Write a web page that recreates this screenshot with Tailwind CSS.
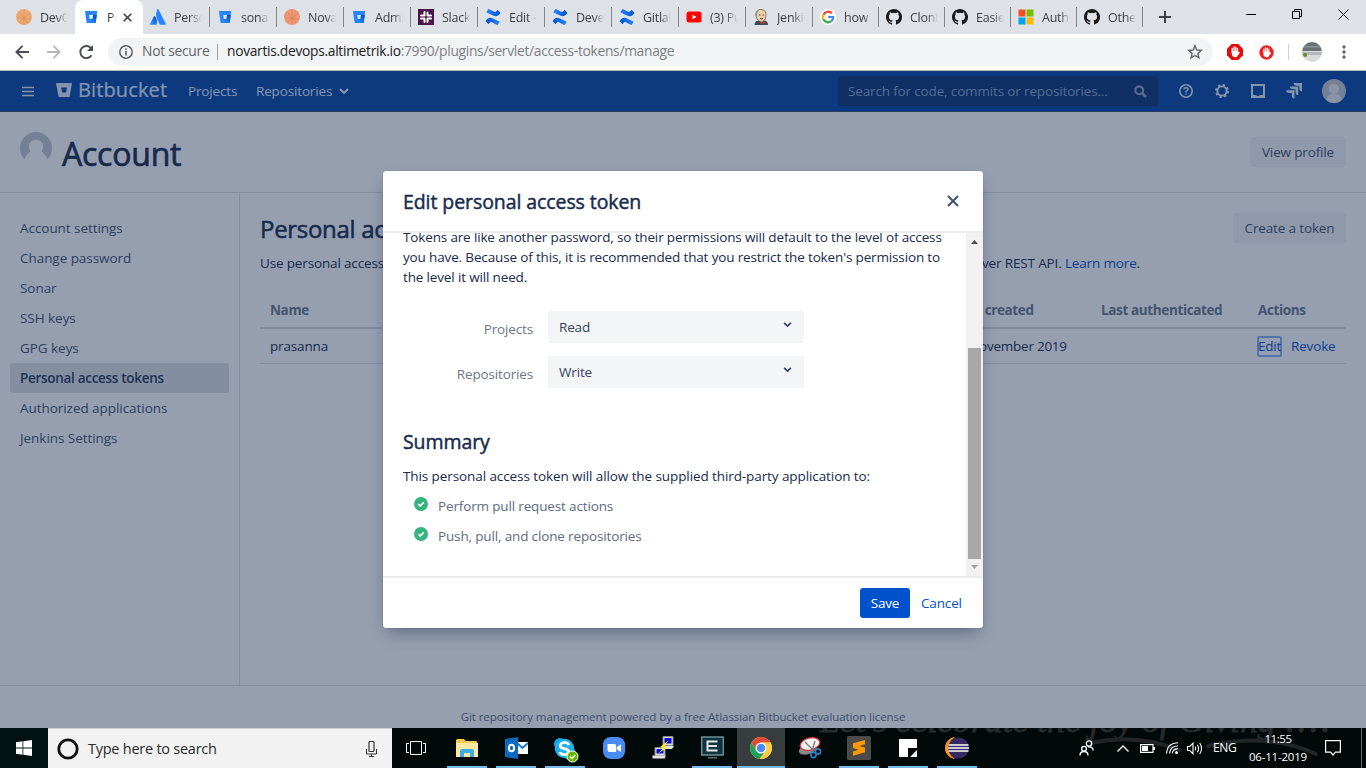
<!DOCTYPE html>
<html lang="en">
<head>
<meta charset="utf-8">
<title>Edit personal access token</title>
<script src="https://cdn.jsdelivr.net/npm/@tailwindcss/browser@4"></script>
</head>
<body class="w-[1366px] h-[768px] overflow-hidden bg-white font-['Open_Sans',sans-serif] text-[13.5px] tracking-[-0.15px] text-[#172b4d]">
<svg class="absolute size-0" aria-hidden="true">
  <defs>
    <linearGradient id="gb" x1="1" y1="0" x2="0" y2="1"><stop offset="0.15" stop-color="#0052cc"/><stop offset="0.7" stop-color="#2684ff"/></linearGradient>
    <linearGradient id="gc" x1="0" y1="0" x2="1" y2="0"><stop offset="0" stop-color="#0052cc"/><stop offset="1" stop-color="#2684ff"/></linearGradient>
  </defs>
  <symbol id="bb" viewBox="0 0 16 16"><path fill="#2684ff" fill-rule="evenodd" d="M2.500 2h11.200q.6 0 .5.6l-1.500 10.800q-.1.600-.7.600H4.300q-.6 0-.7-.6L2 2.600Q1.900 2 2.500 2zM6.200 6l.6 4h2.700l.6-4z"/><path fill="url(#gb)" d="M13.800 6H10.100l-.6 4H6.800l-3 3.700q.2.300.6.300H12q.6 0 .7-.6z"/></symbol>
  <symbol id="cf" viewBox="0 0 16 16"><path fill="url(#gc)" d="M.8 11.800C3 8.400 5.200 8.200 8.500 9.700l5.800 2.700q.4.300.2.700l-1.500 2.500q-.3.500-.8.300L7.500 13.500C5.600 12.600 5 13 3.900 14.700q-.3.400-.7.200L.9 12.600q-.4-.3-.1-.8z"/><path fill="url(#gc)" transform="rotate(180 8 8)" d="M.8 11.800C3 8.400 5.200 8.200 8.500 9.700l5.800 2.700q.4.300.2.700l-1.500 2.500q-.3.500-.8.300L7.500 13.500C5.600 12.600 5 13 3.900 14.700q-.3.400-.7.200L.9 12.600q-.4-.3-.1-.8z"/></symbol>
  <symbol id="gh" viewBox="0 0 16 16"><path fill="#191717" d="M8 0C3.580 0 0 3.580 0 8c0 3.540 2.290 6.530 5.470 7.590.4.070.55-.17.55-.38v-1.490c-2.230.48-2.700-.94-2.700-.94-.36-.92-.89-1.170-.89-1.170-.72-.49.060-.48.060-.48.800.060 1.230.82 1.230.82.710 1.220 1.870.87 2.330.66.070-.52.280-.87.500-1.070-1.780-.2-3.640-.89-3.640-3.950 0-.87.310-1.590.82-2.150-.08-.2-.36-1.020.080-2.120 0 0 .67-.21 2.200.82a7.600 7.600 0 0 1 4 0c1.530-1.040 2.200-.82 2.200-.82.440 1.100.160 1.920.080 2.120.510.560.820 1.270.820 2.150 0 3.070-1.870 3.750-3.650 3.950.290.250.540.730.540 1.480v2.200c0 .210.150.460.550.380A8 8 0 0 0 8 0z"/></symbol>
  <symbol id="sun" viewBox="0 0 16 16"><circle cx="8" cy="8" r="8" fill="currentColor"/><g stroke="#b8744a" stroke-width=".5" opacity=".65"><path d="M8 9 3 3M8 9V1M8 9l6-5M8 9H1M8 9l7 1M8 9l-5 5M8 9v6.500M8 9l4 5"/></g></symbol>
  <symbol id="chev" viewBox="0 0 10 6"><path d="m1 1 4 4 4-4" fill="none" stroke="currentColor" stroke-width="2"/></symbol>
</svg>

<div class="relative flex h-[768px] flex-col">
  <!-- tab strip -->
  <div class="flex h-[34px] shrink-0 bg-[#dee1e6] text-[12.500px] leading-[33px] tracking-[-0.250px] text-[#3c4043]">
    <div class="flex w-[75px] items-center pl-4"><svg class="mr-2 size-4 shrink-0 text-[#efa872]"><use href="#sun"/></svg><span class="w-7 overflow-hidden whitespace-nowrap [mask-image:linear-gradient(to_right,#000_55%,transparent)]">DevOps</span></div>
    <div class="flex w-[68px] items-center rounded-t-lg bg-white pl-2"><svg class="mr-2 size-4 shrink-0"><use href="#bb"/></svg><span class="w-[9px] overflow-hidden whitespace-nowrap [mask-image:linear-gradient(to_right,#000_55%,transparent)]">Pers</span><svg class="ml-[7px] size-[9px]" viewBox="0 0 9 9"><path d="m.7.7 7.600 7.600M8.300.7.700 8.300" stroke="#3c4043" stroke-width="1.600"/></svg></div>
    <div class="flex w-[67px] items-center pl-[7px]"><svg class="mr-2 size-4 shrink-0" viewBox="0 0 16 16"><path fill="url(#gb)" d="M4.800 7.200Q4.300 6.700 4 7.300L.1 15q-.2.600.4.700h5.400q.3 0 .5-.3C7.500 13 7 9.500 4.800 7.200z"/><path fill="#2684ff" d="M7.700.3C5.600 3.600 5.800 7.300 7.100 10l2.700 5.400q.2.300.6.300h5.100q.6-.1.400-.7L8.500.4q-.4-.6-.8-.1z"/></svg><span class="w-7 overflow-hidden whitespace-nowrap [mask-image:linear-gradient(to_right,#000_55%,transparent)]">Personal</span><i class="ml-auto h-5 w-px bg-[#80868b]"></i></div>
    <div class="flex w-[67px] items-center pl-[7px]"><svg class="mr-2 size-4 shrink-0"><use href="#bb"/></svg><span class="w-7 overflow-hidden whitespace-nowrap [mask-image:linear-gradient(to_right,#000_65%,transparent)]">sonar-</span><i class="ml-auto h-5 w-px bg-[#80868b]"></i></div>
    <div class="flex w-[67px] items-center pl-[7px]"><svg class="mr-2 size-4 shrink-0 text-[#ed9672]"><use href="#sun"/></svg><span class="w-7 overflow-hidden whitespace-nowrap [mask-image:linear-gradient(to_right,#000_65%,transparent)]">Novartis</span><i class="ml-auto h-5 w-px bg-[#80868b]"></i></div>
    <div class="flex w-[67px] items-center pl-[7px]"><svg class="mr-2 size-4 shrink-0"><use href="#bb"/></svg><span class="w-7 overflow-hidden whitespace-nowrap [mask-image:linear-gradient(to_right,#000_65%,transparent)]">Admin</span><i class="ml-auto h-5 w-px bg-[#80868b]"></i></div>
    <div class="flex w-[67px] items-center pl-[7px]"><svg class="mr-2 size-4 shrink-0" viewBox="0 0 16 16"><path fill="#4a154b" d="M0 0h16v16H0z"/><path d="M6.500 3v3.500M3 6.500h3.500M9.500 3.500v3M9.700 6.500H13M3 9.500h3.300M6.500 9.700V13M9.500 9.500H13M9.500 9.700V13" stroke="#fff" stroke-width="2" stroke-linecap="round"/></svg><span class="w-7 overflow-hidden whitespace-nowrap [mask-image:linear-gradient(to_right,#000_75%,transparent)]">Slack</span><i class="ml-auto h-5 w-px bg-[#80868b]"></i></div>
    <div class="flex w-[67px] items-center pl-[7px]"><svg class="mr-2 size-4 shrink-0"><use href="#cf"/></svg><span class="w-7 overflow-hidden whitespace-nowrap [mask-image:linear-gradient(to_right,#000_65%,transparent)]">Edit - P</span><i class="ml-auto h-5 w-px bg-[#80868b]"></i></div>
    <div class="flex w-[67px] items-center pl-[7px]"><svg class="mr-2 size-4 shrink-0"><use href="#cf"/></svg><span class="w-7 overflow-hidden whitespace-nowrap [mask-image:linear-gradient(to_right,#000_65%,transparent)]">Develop</span><i class="ml-auto h-5 w-px bg-[#80868b]"></i></div>
    <div class="flex w-[67px] items-center pl-[7px]"><svg class="mr-2 size-4 shrink-0"><use href="#cf"/></svg><span class="w-7 overflow-hidden whitespace-nowrap [mask-image:linear-gradient(to_right,#000_65%,transparent)]">Gitlab</span><i class="ml-auto h-5 w-px bg-[#80868b]"></i></div>
    <div class="flex w-[67px] items-center pl-[7px]"><svg class="mr-2 size-4 shrink-0" viewBox="0 0 16 16"><rect x=".5" y="2.500" width="15" height="11" rx="2.500" fill="red"/><path d="M6.500 5.700v4.600L10.500 8z" fill="#fff"/></svg><span class="w-7 overflow-hidden whitespace-nowrap [mask-image:linear-gradient(to_right,#000_55%,transparent)]">(3) Pull</span><i class="ml-auto h-5 w-px bg-[#80868b]"></i></div>
    <div class="flex w-[67px] items-center pl-[7px]"><svg class="mr-2 size-4 shrink-0" viewBox="0 0 16 16"><path d="M1.500 16q0-4 4-4.500L8 13l4-1.500q3 1 3 4.500z" fill="#3b4a55"/><path d="M3 6.500C2.500 2.500 5 .5 8 .5s5.500 2 5 6.200c-.3 3.300-2 6-4.500 6S3.500 10 3 6.500z" fill="#eccfae" stroke="#5b4a3a" stroke-width=".7"/><path d="M2.700 7C2 3 4 .8 7 .7 4.500 2 4.200 4 4 7z" fill="#9a9488"/><path d="M6 6h1.500M9.500 6H11M7 9.500q1.500.8 3 0" stroke="#4a3930" fill="none"/><path d="M7 12.500v2.500l2-1 2.500 1.200v-2.900L9 13.300z" fill="#d33833"/></svg><span class="w-7 overflow-hidden whitespace-nowrap [mask-image:linear-gradient(to_right,#000_55%,transparent)]">Jenkins</span><i class="ml-auto h-5 w-px bg-[#80868b]"></i></div>
    <div class="flex w-[66px] items-center pl-[7px]"><svg class="mr-2 size-4 shrink-0" viewBox="0 0 16 16"><circle cx="8" cy="8" r="8" fill="#fff"/><g fill="none" stroke-width="2.200"><path d="M11.900 4.300A5.200 5.200 0 0 0 3.400 5.700" stroke="#ea4335"/><path d="M3.400 5.600a5.200 5.200 0 0 0 0 4.900" stroke="#fbbc05"/><path d="M3.300 10.300a5.200 5.200 0 0 0 8 1.800" stroke="#34a853"/><path d="M8.200 8h5a5.200 5.200 0 0 1-1.900 4.100" stroke="#4285f4"/></g></svg><span class="w-7 overflow-hidden whitespace-nowrap [mask-image:linear-gradient(to_right,#000_70%,transparent)]">how to</span><i class="ml-auto h-5 w-px bg-[#80868b]"></i></div>
    <div class="flex w-[66px] items-center pl-[7px]"><svg class="mr-2 size-4 shrink-0"><use href="#gh"/></svg><span class="w-7 overflow-hidden whitespace-nowrap [mask-image:linear-gradient(to_right,#000_60%,transparent)]">Cloning</span><i class="ml-auto h-5 w-px bg-[#80868b]"></i></div>
    <div class="flex w-[66px] items-center pl-[7px]"><svg class="mr-2 size-4 shrink-0"><use href="#gh"/></svg><span class="w-7 overflow-hidden whitespace-nowrap [mask-image:linear-gradient(to_right,#000_60%,transparent)]">Easiest</span><i class="ml-auto h-5 w-px bg-[#80868b]"></i></div>
    <div class="flex w-[66px] items-center pl-[7px]"><svg class="mr-2 size-4 shrink-0" viewBox="0 0 16 16"><path fill="#f25022" d="M.5.500h7v7h-7z"/><path fill="#7fba00" d="M8.500.500h7v7h-7z"/><path fill="#00a4ef" d="M.5 8.500h7v7h-7z"/><path fill="#ffb900" d="M8.500 8.500h7v7h-7z"/></svg><span class="w-7 overflow-hidden whitespace-nowrap [mask-image:linear-gradient(to_right,#000_65%,transparent)]">Authen</span><i class="ml-auto h-5 w-px bg-[#80868b]"></i></div>
    <div class="flex w-[66px] items-center pl-[7px]"><svg class="mr-2 size-4 shrink-0"><use href="#gh"/></svg><span class="w-7 overflow-hidden whitespace-nowrap [mask-image:linear-gradient(to_right,#000_65%,transparent)]">Other</span><i class="ml-auto h-5 w-px bg-[#80868b]"></i></div>
    <svg class="mt-[11px] ml-4 size-3" viewBox="0 0 12 12"><path d="M6 0v12M0 6h12" stroke="#3c4043" stroke-width="2"/></svg>
    <svg class="mt-[9px] mr-[17px] ml-auto h-[11px] w-[103px]" viewBox="0 0 103 11" fill="none" stroke="#000"><path d="M0 5.500h10M46.500 2.500h7v7h-7zM48.500 2.500v-2h7v7h-2M92.500.500l10 10M102.500.500l-10 10"/></svg>
  </div>

  <!-- address bar -->
  <div class="flex h-[37px] shrink-0 items-center border-b border-[#b6b8ba] bg-white pl-[15px]">
    <svg class="h-[14px] w-[82px]" viewBox="0 0 82 14" fill="none" stroke-width="1.900"><path d="M14 7H1.500M7.500.900 1.400 7l6.100 6.100" stroke="#4a4d51"/><path d="M32 7h12.500M38.500.900 44.600 7l-6.100 6.100" stroke="#b5b7ba"/><path d="M76.500 10.200A6 6 0 1 1 75.600 2.800L77.500 5" stroke="#4a4d51"/><path d="M78 0v5.900h-6z" fill="#4a4d51"/></svg>
    <div class="ml-[11px] flex h-7 w-[1105px] items-center rounded-full bg-[#f1f3f4] pl-[11px]">
      <svg class="size-[14px]" viewBox="0 0 14 14"><circle cx="7" cy="7" r="6.200" fill="none" stroke="#5f6368" stroke-width="1.500"/><path d="M7 6v4.500M7 3.300v1.500" stroke="#5f6368" stroke-width="1.600"/></svg>
      <span class="ml-[9px] w-[67px] pb-px text-[13.800px] tracking-[-0.250px] whitespace-nowrap text-[#5f6368]">Not secure</span>
      <i class="mr-[9px] ml-2 h-4 w-px bg-[#9aa0a6]"></i>
      <span class="pb-px text-[13.800px] tracking-[-0.300px] whitespace-nowrap text-[#7c8085]"><span class="text-[#202124]">novartis.devops.altimetrik.io</span>:7990/plugins/servlet/access-tokens/manage</span>
      <svg class="mr-[10px] ml-auto size-4" viewBox="0 0 16 16"><path d="m8 1.800 1.800 4.200 4.500.400-3.400 3 1 4.400L8 11.500l-3.900 2.300 1-4.400-3.400-3L6.200 6z" fill="none" stroke="#5f6368" stroke-width="1.400"/></svg>
    </div>
    <svg class="ml-[14px] size-4" viewBox="0 0 16 16"><path d="M4.700 0h6.600L16 4.700v6.600L11.300 16H4.700L0 11.300V4.700z" fill="#e30b0b"/><path d="M5.200 8V4.500M7 7.500V3M8.800 7.500V3.200M10.500 8V4.300" stroke="#fff" stroke-width="1.300" stroke-linecap="round"/><path d="M4.500 7h6.700v3.500q-.5 2.700-3 2.700T5 11z" fill="#fff"/><path d="m11 10.500 1.300-2.500" stroke="#fff" stroke-width="1.400"/></svg>
    <svg class="ml-4 size-[15px]" viewBox="0 0 16 16"><circle cx="8" cy="8" r="7.700" fill="#f91c1c"/><path d="M5.200 8V4.500M7 7.500V3M8.800 7.500V3.200M10.500 8V4.300" stroke="#fff" stroke-width="1.300" stroke-linecap="round"/><path d="M4.500 7h6.700v3.500q-.5 2.700-3 2.700T5 11z" fill="#fff"/><path d="m11 10.500 1.300-2.500" stroke="#fff" stroke-width="1.400"/></svg>
    <i class="ml-[14px] h-4 w-px bg-[#d0d3d6]"></i>
    <svg class="ml-[13px] size-5" viewBox="0 0 20 20"><clipPath id="pc"><circle cx="10" cy="10" r="10"/></clipPath><g clip-path="url(#pc)"><path fill="#d9dadb" d="M0 0h20v20H0z"/><path fill="#6d7175" d="M0 0h20v9H0z"/><path fill="#8d9092" d="M2 4h16v1.500H2z"/><path fill="#b4b6b8" d="M0 10h20v3H0z"/><circle cx="3" cy="13" r="2" fill="#5c8a20"/></g></svg>
    <svg class="ml-5 h-[14px] w-1" viewBox="0 0 4 14" fill="#5f6368"><circle cx="2" cy="2" r="1.700"/><circle cx="2" cy="7" r="1.700"/><circle cx="2" cy="12" r="1.700"/></svg>
  </div>

  <!-- page -->
  <div class="relative flex h-[657px] shrink-0 flex-col overflow-hidden">
    <header class="flex h-[41px] shrink-0 items-center border-b border-[#2e4a7c] bg-[#0747a6] pl-[22px] text-[#deebff]">
      <svg class="h-[11px] w-3" viewBox="0 0 12 11"><path d="M0 1.500h12M0 5.500h12M0 9.500h12" stroke="currentColor" stroke-width="1.500"/></svg>
      <svg class="ml-[22px] mb-[3px] h-[14px] w-4" viewBox="0 0 16 14"><path d="M0 0h16l-2.300 13.400q-.1.600-.7.600H3.200q-.6 0-.7-.6zM5.200 4.500l1 5h4l.8-5z" fill="currentColor" fill-rule="evenodd"/></svg>
      <span class="ml-[6px] w-[89px] pb-[3px] text-[20px] leading-6 tracking-[0.120px] whitespace-nowrap [-webkit-text-stroke:0.2px]">Bitbucket</span>
      <span class="ml-[21px] w-[49px] whitespace-nowrap">Projects</span>
      <span class="ml-[19px] w-[77px] whitespace-nowrap">Repositories</span>
      <svg class="ml-[6px] h-[6px] w-[10px]"><use href="#chev"/></svg>
      <div class="ml-auto flex h-[30px] w-[320px] items-center rounded-[3px] bg-[#0a3478] pl-[10px] text-[#8aa2cd]"><span class="w-[262px] whitespace-nowrap">Search for code, commits or repositories...</span>
        <svg class="ml-auto mr-[11px] size-[13px]" viewBox="0 0 13 13"><circle cx="5.200" cy="5.200" r="3.900" fill="none" stroke="currentColor" stroke-width="2.200"/><path d="m8 8 4 4" stroke="currentColor" stroke-width="2.600"/></svg></div>
      <svg class="ml-[21px] size-[14px]" viewBox="0 0 14 14"><circle cx="7" cy="7" r="6.200" fill="none" stroke="currentColor" stroke-width="1.600"/><path d="M5 5.500Q5 3.800 7 3.800t2 1.700Q9 6.700 7 7.300v1.200M7 9.500V11" fill="none" stroke="currentColor" stroke-width="1.400"/></svg>
      <svg class="ml-[22px] size-[14px]" viewBox="0 0 14 14" fill="none" stroke="currentColor"><circle cx="7" cy="7" r="4.600" stroke-width="1.900"/><circle cx="7" cy="7" r="6" stroke-width="2" stroke-dasharray="2.350 2.350"/></svg>
      <svg class="ml-[22px] size-[14px]" viewBox="0 0 14 14"><path d="M1 1h12v12H1z" fill="none" stroke="currentColor" stroke-width="2"/><path d="M1 11h4l1 1h2l1-1h4v2H1z" fill="currentColor"/></svg>
      <svg class="ml-[21px] size-4" viewBox="0 0 16 16" fill="currentColor"><path d="M7.500 0H16v8.500q-2.700-.3-2.700-3.200V2.700h-2.600Q7.800 2.700 7.500 0z"/><path d="M3.700 3.600h8.500v8.500q-2.700-.3-2.700-3.200V6.300H6.900Q4 6.300 3.700 3.600z"/><path d="M0 7.300h8.500v8.500q-2.700-.3-2.700-3.200V10H3.200Q.3 10 0 7.300z"/></svg>
      <svg class="mx-5 size-6" viewBox="0 0 24 24"><circle cx="12" cy="12" r="12" fill="#c1c7d0"/><circle cx="12" cy="9.800" r="5" fill="#ebecf0"/><path d="M4 20.500Q6 14.500 12 14.500t8 6Q17 24 12 24t-8-3.500z" fill="#ebecf0"/></svg>
    </header>

    <div class="flex h-[81px] shrink-0 items-start border-b border-[#dfe1e6] pl-5">
      <svg class="mt-5 size-8" viewBox="0 0 32 32"><path d="M4.500 27.200a16 16 0 1 1 23 0Q25.500 22 21.500 19.500a7.200 7.200 0 1 0-11 0Q6.500 22 4.500 27.200z" fill="#c1c7d0"/></svg>
      <h1 class="ml-[10px] mt-[22px] text-[32px] leading-10 tracking-[-0.220px] [-webkit-text-stroke:0.7px]">Account</h1>
      <span class="mt-[25px] mr-5 ml-auto w-24 rounded-[3px] bg-[#f4f5f7] text-center leading-[30px] text-[#42526e]">View profile</span>
    </div>

    <div class="flex h-[493px] shrink-0 border-b border-[#dfe1e6]">
      <nav class="flex w-60 shrink-0 flex-col border-r border-[#dfe1e6] px-[10px] pt-5 leading-[30px] tracking-[-0.050px] text-[#42526e] [&>a]:rounded-[3px] [&>a]:px-[10px]">
        <a>Account settings</a><a>Change password</a><a>Sonar</a><a>SSH keys</a><a>GPG keys</a><a class="bg-[#dfe1e6] font-semibold tracking-[-0.300px] text-[#253858]">Personal access tokens</a><a>Authorized applications</a><a>Jenkins Settings</a>
      </nav>
      <main class="flex grow flex-col pt-5 pr-5 pl-5">
        <div class="flex justify-between">
          <h2 class="text-[24px] leading-8 tracking-[-0.300px] [-webkit-text-stroke:0.55px]">Personal access tokens</h2>
          <span class="h-[30px] w-[113px] rounded-[3px] bg-[#f4f5f7] text-center leading-[30px] text-[#42526e]">Create a token</span>
        </div>
        <p class="mt-2 flex leading-5 whitespace-nowrap"><span class="w-[722px] overflow-hidden">Use personal access tokens in place of passwords for Git over HTTPS, or when using Bitbucket Ser</span><span>ver REST API. <a class="text-[#0052cc]">Learn more</a>.</span></p>
        <div class="mt-[19px] grid h-[37px] grid-cols-[681px_150px_157px_88px] border-b-2 border-[#d7dae0] pl-[10px] leading-[36px] font-bold tracking-[-0.370px] text-[#6b778c]"><span>Name</span><span>Date created</span><span>Last authenticated</span><span>Actions</span></div>
        <div class="grid h-[35px] grid-cols-[681px_150px_157px_88px] border-b border-[#dfe1e6] pl-[10px] leading-[34px] whitespace-nowrap"><span>prasanna</span><span class="tracking-[-0.250px]">06 November 2019</span><span></span><span class="flex items-center gap-[10px] text-[#0052cc]"><a class="-ml-px h-[21px] w-[25px] rounded-[2px] border-2 border-[#86b0f5] leading-[17px] tracking-[-0.250px]"><span class="-ml-px">Edit</span></a><a class="-ml-px">Revoke</a></span></div>
      </main>
    </div>
    <footer class="pt-[22px] text-center text-[11.500px] leading-[18px] tracking-[-0.080px] text-[#5e6c84]">Git repository management powered by a free Atlassian Bitbucket evaluation license</footer>

    <!-- dialog -->
    <div class="absolute inset-0 bg-[#172b4d]/45">
      <section class="absolute top-[100px] left-[383px] flex h-[457px] w-[600px] flex-col rounded-[3px] bg-white shadow-[0_8px_16px_-4px_rgba(9,30,66,0.4),0_0_1px_rgba(9,30,66,0.4)]">
        <div class="flex h-[62px] shrink-0 items-center justify-between border-b-2 border-[#ebecf0] pr-6 pl-5"><h3 class="pt-[1px] text-[19.500px] tracking-[-0.080px] [-webkit-text-stroke:0.45px]">Edit personal access token</h3><svg class="size-3" viewBox="0 0 12 12"><path d="m1 1 10 10M11 1 1 11" stroke="#42526e" stroke-width="2"/></svg></div>
        <div class="flex h-[343px] shrink-0">
          <div class="flex w-[583px] flex-col overflow-hidden pl-5">
            <p class="-mt-[6px] leading-5 whitespace-nowrap">Tokens are like another password, so their permissions will default to the level of access<br>you have. Because of this, it is recommended that you restrict the token's permission to<br>the level it will need.</p>
            <div class="mt-[24px] flex h-8"><span class="w-[130px] pt-[8px] text-right leading-5 text-[#6b778c]">Projects</span><span class="ml-[15px] flex w-64 justify-between rounded-[3px] bg-[#f4f5f7] pr-[12px] pl-[11px] leading-8 text-[#344563]">Read<svg class="mt-[11px] h-[5px] w-[9px]"><use href="#chev"/></svg></span></div>
            <div class="mt-[13px] flex h-8"><span class="w-[130px] pt-[8px] text-right leading-5 text-[#6b778c]">Repositories</span><span class="ml-[15px] flex w-64 justify-between rounded-[3px] bg-[#f4f5f7] pr-[12px] pl-[11px] leading-8 text-[#344563]">Write<svg class="mt-[11px] h-[5px] w-[9px]"><use href="#chev"/></svg></span></div>
            <h3 class="mt-10 text-[19.500px] leading-7 tracking-[-0.080px] [-webkit-text-stroke:0.45px]">Summary</h3>
            <p class="mt-[10px] leading-5 tracking-[-0.090px]">This personal access token will allow the supplied third-party application to:</p>
            <ul class="mt-[10px] flex flex-col gap-[10px] pl-[11px] leading-5 text-[#5e6c84]">
              <li class="flex"><svg class="mt-px mr-[10px] size-[14px]" viewBox="0 0 14 14"><circle cx="7" cy="7" r="7" fill="#36b37e"/><path d="m4.300 7 1.900 2 3.600-3.600" fill="none" stroke="#fff" stroke-width="1.800"/></svg><span>Perform pull request actions</span></li>
              <li class="flex"><svg class="mt-px mr-[10px] size-[14px]" viewBox="0 0 14 14"><circle cx="7" cy="7" r="7" fill="#36b37e"/><path d="m4.300 7 1.900 2 3.600-3.600" fill="none" stroke="#fff" stroke-width="1.800"/></svg><span>Push, pull, and clone repositories</span></li>
            </ul>
          </div>
          <div class="flex w-[17px] flex-col bg-[#f1f1f1] px-[2px]"><svg class="mt-[7px] ml-[3px] h-1 w-[7px]" viewBox="0 0 7 4"><path d="M0 4 3.500 0 7 4z" fill="#505050"/></svg><i class="mt-[104px] h-[211px] w-[13px] bg-[#a8a8a8]"></i><svg class="mt-[6px] ml-[3px] h-1 w-[7px]" viewBox="0 0 7 4"><path d="M0 0 3.500 4 7 0z" fill="#a3a3a3"/></svg></div>
        </div>
        <div class="flex grow items-center justify-end border-t-2 border-[#ebecf0] pr-[21px]"><span class="w-[50px] rounded-[3px] bg-[#0052cc] text-center leading-[30px] text-white">Save</span><span class="ml-[11px] w-[41px] whitespace-nowrap text-[#0052cc]">Cancel</span></div>
      </section>
    </div>
  </div>

  <!-- taskbar -->
  <div class="relative flex h-10 shrink-0 overflow-hidden bg-[#020909] text-white">
    <div class="absolute -top-[30px] left-[820px] font-['Liberation_Serif',serif] text-[36px] leading-[44px] tracking-[-0.150px] whitespace-nowrap text-[#262a2a] italic [-webkit-text-stroke:0.8px_#262a2a]">Let's celebrate the joy of Giving !!!!</div>
    <svg class="absolute top-[8px] left-[1090px] h-6 w-[235px]" viewBox="0 0 235 24"><path d="M0 7Q45-3 90 14M118 10q60-14 108 8" fill="none" stroke="#212525" stroke-width="4" stroke-linecap="round"/></svg>
    <div class="relative flex w-full">
      <div class="flex w-12 items-center justify-center bg-[#021313]"><svg class="size-4" viewBox="0 0 16 16" fill="#fff"><path d="M0 2.200 6.500 1.300v6.200H0zM7.300 1.200 16 0v7.500H7.300zM0 8.400h6.500v6.300L0 13.800zM7.300 8.400H16V16l-8.700-1.200z"/></svg></div>
      <div class="flex w-[344px] items-center border-t border-[#cfcfcf] bg-[#f2f2f2] pl-[9px] text-[#2b2b2b]"><svg class="size-[22px]" viewBox="0 0 22 22"><circle cx="11" cy="11" r="9.200" fill="none" stroke="#111" stroke-width="2.800"/></svg><span class="ml-[9px] w-[128px] text-[14.500px] tracking-[-0.250px] whitespace-nowrap">Type here to search</span><svg class="mr-[15px] ml-auto h-4 w-[11px]" viewBox="0 0 11 16" fill="none" stroke="#333"><rect x="3" y=".5" width="5" height="10" rx="1" stroke-width="1.200"/><path d="M.5 8v5h10V8M5.500 13v3M3 15.500h5"/></svg></div>
      <div class="flex w-[51px] items-center pl-[14px]"><svg class="h-[14px] w-5" viewBox="0 0 20 14" fill="none" stroke="#fff"><path d="M4.500.5h11v13h-11zM3 2.500H.500v9H3M17 2.500h2.500v9H17"/></svg></div>
      <div class="flex gap-px [&>div]:flex [&>div]:w-12 [&>div]:items-center [&>div]:justify-center [&>div]:pb-px">
        <div class="shadow-[inset_0_-2px_#76b9ed] [clip-path:inset(0_4px)]"><svg class="h-[18px] w-[22px]" viewBox="0 0 22 18"><path d="M0 1.500Q0 0 1.500 0H8l1.500 2H20q1 0 1 1v14H0z" fill="#f5c951"/><path d="M0 4h22v14H0z" fill="#ffe9a2"/><path d="M4 18v-6q0-2 2-2h10q2 0 2 2v6h-4v-4H8v4z" fill="#3bb0e6"/></svg></div>
        <div class="shadow-[inset_0_-2px_#76b9ed] [clip-path:inset(0_4px)]"><svg class="h-[22px] w-[23px]" viewBox="0 0 23 22"><path d="M12 5h11v12H12z" fill="#fff"/><path d="m12 6 5.500 5L23 6" fill="none" stroke="#1477cc" stroke-width="2"/><path d="m0 2 13-2v22L0 20z" fill="#0a6abf"/><ellipse cx="6.500" cy="11" rx="2.600" ry="3.300" fill="none" stroke="#fff" stroke-width="2"/></svg></div>
        <div class="shadow-[inset_0_-2px_#76b9ed] [clip-path:inset(0_4px)]"><svg class="mt-1 ml-[1px] size-[26px]" viewBox="0 0 26 26"><circle cx="7" cy="7" r="6" fill="#12a5e8"/><circle cx="16" cy="16" r="6.500" fill="#12a5e8"/><circle cx="11.500" cy="11.500" r="9.700" fill="#1fb0ee"/><path d="M16 8Q15 5.500 11.500 5.500T7.200 8.400q0 2.500 4 3.200t4.500 3q0 3-4.200 3T7 15" fill="none" stroke="#fff" stroke-width="2.700"/><circle cx="19.500" cy="19.500" r="5.500" fill="#6bb700" stroke="#fff"/><path d="m17 19.500 2 2 3.200-3.500" fill="none" stroke="#fff" stroke-width="1.500"/></svg></div>
        <div><svg class="size-[22px]" viewBox="0 0 22 22"><rect width="22" height="22" rx="7.500" fill="#4a8cf7"/><path d="M4.500 7h6.700q2 0 2 2v6H6.500q-2 0-2-2zM14 10l4-2.800v7.800L14 12.500z" fill="#fff"/></svg></div>
        <div><svg class="size-[23px]" viewBox="0 0 23 23"><path d="M11 .500h10v9H11zM3 11.500h10v8H3z" fill="#ddd" stroke="#888"/><path d="M12.500 2h7v5.500h-7zM4.500 13h7v4.500h-7z" fill="#0808ce"/><path d="M10 10h12l-2 3h-9zM.5 19.500H14L12.500 22.500H.500z" fill="#e5e5e5"/><path d="m17 4-9 7 4 .500-6 6 9.500-6-3.500-1z" fill="#ffee13"/></svg></div>
        <div class="shadow-[inset_0_-2px_#76b9ed] [clip-path:inset(0_4px)]"><svg class="size-[23px]" viewBox="0 0 23 23"><path d="M.700 1h21.600v18H.700z" fill="#10343d" stroke="#6a9199" stroke-width="1.400"/><path d="M16.500 5.500h-10v9h10M7 10h9" fill="none" stroke="#e4eaeb" stroke-width="2"/><path d="M7 21.800h9" stroke="#4b6d75" stroke-width="1.500"/></svg></div>
        <div class="bg-[#373d3d] shadow-[inset_0_-2px_#76b9ed]"><svg class="size-[22px]" viewBox="0 0 22 22"><circle cx="11" cy="11" r="11" fill="#ffcd42"/><path d="M1.500 5.500A11 11 0 0 1 20.500 5.500H11L6.200 13.700z" fill="#e04a3a"/><path d="M1.500 5.500A11 11 0 0 0 9.600 21.900L15.500 14 11 16 6.200 13.700z" fill="#1fa15d"/><path d="M11 5.500h9.500A11 11 0 0 1 9.600 21.900L15.800 13.700z" fill="#ffcd42"/><circle cx="11" cy="11" r="5.500" fill="#fff"/><circle cx="11" cy="11" r="4.300" fill="#4c8bf5"/></svg></div>
        <div><svg class="h-[22px] w-6" viewBox="0 0 24 22"><ellipse cx="10" cy="12" rx="9.500" ry="5" fill="#888" transform="rotate(-20 10 12)"/><ellipse cx="12" cy="7" rx="10" ry="6" fill="#f3f3f3" stroke="#d6323a" stroke-width="1.200" transform="rotate(-15 12 7)"/><path d="m7 5 9 9M17 4l-3 10" stroke="#777" stroke-width="1.300"/><circle cx="20" cy="14.500" r="2.600" fill="none" stroke="#2583c6" stroke-width="1.600"/><circle cx="15.500" cy="18" r="2.600" fill="none" stroke="#2583c6" stroke-width="1.600"/></svg></div>
        <div class="shadow-[inset_0_-2px_#76b9ed] [clip-path:inset(0_4px)]"><svg class="size-6" viewBox="0 0 24 24"><rect width="24" height="24" rx="1.500" fill="#4b4b4b"/><path d="M6 7.300 18 4v4.300l-5.500 1.600 5.500 1.700v4.700L6 19.800v-4.400l5.600-1.600L6 12z" fill="#ff9800"/></svg></div>
        <div class="shadow-[inset_0_-2px_#76b9ed] [clip-path:inset(0_4px)]"><svg class="size-[18px]" viewBox="0 0 18 18"><path d="M0 0h18v9H9v9H0z" fill="#fff"/><path d="m11 18 7-7v7z" fill="#fff"/></svg></div>
        <div class="shadow-[inset_0_-2px_#76b9ed] [clip-path:inset(0_4px)]"><svg class="h-[22px] w-6" viewBox="0 0 24 22"><path d="M9 .500A10.700 10.700 0 0 0 9 21.500 13 13 0 0 1 9 .500z" fill="#f7941e" stroke="#f7941e"/><circle cx="13.500" cy="11" r="10.500" fill="#352a63"/><path d="M3.500 8h20M3 11h21M3.500 14h20" stroke="#fff" stroke-width="1.700"/></svg></div>
      </div>
      <div class="ml-[98px] flex grow items-center">
        <svg class="h-4 w-[15px]" viewBox="0 0 15 16" fill="none" stroke="#fff" stroke-width="1.300"><circle cx="10" cy="3.500" r="2.700"/><circle cx="5" cy="8.800" r="2.400"/><path d="M9 7q5-.5 5.200 3.500M1 15.500Q1 11.500 5 11.500t4 4"/></svg>
        <svg class="ml-[23px] h-[7px] w-3" viewBox="0 0 12 7"><path d="m.5 6.500 5.500-5.500 5.500 5.500" fill="none" stroke="#fff" stroke-width="1.300"/></svg>
        <svg class="ml-[11px] h-[9px] w-[15px]" viewBox="0 0 15 9"><path d="M.600.600h12.400v7.800H.600z" fill="none" stroke="#fff" stroke-width="1.200"/><path d="M2 2h6v5H2zM13 3h2v3h-2z" fill="#fff"/></svg>
        <svg class="ml-[11px] size-3" viewBox="0 0 12 12" fill="none" stroke="#fff" stroke-width="1.100"><path d="M.5 11.500Q1 1 12 .800M3.500 11.500Q4 4 12 3.700M6.300 11.500Q6.500 7 12 6.600"/><circle cx="10.500" cy="10.500" r="1.500" fill="#fff" stroke="none"/></svg>
        <svg class="ml-[9px] h-[13px] w-4" viewBox="0 0 16 13" fill="none" stroke="#fff" stroke-width="1.100"><path d="M.5 4.500h2.300L6 1.200v10.600L2.800 8.500H.500zM8 4.500q1.300 2 0 4M10.300 2.800q2.500 3.700 0 7.400M12.700 1q3.700 5.500 0 11"/></svg>
        <span class="ml-[10px] w-[23px] text-[12px] tracking-[-0.400px]">ENG</span>
        <div class="ml-[12px] flex w-[60px] flex-col items-center text-[11.500px] leading-[18px] tracking-[-0.200px] whitespace-nowrap"><span class="tracking-[-0.450px]">11:55</span><span>06-11-2019</span></div>
        <svg class="ml-[17px] h-4 w-4" viewBox="0 0 16 16"><path d="M.600.600h14.800v11.600h-5L8 15l-2.400-2.800h-5z" fill="none" stroke="#fff" stroke-width="1.200"/></svg>
        <i class="ml-auto mr-1 h-full w-px bg-[#626767]"></i>
      </div>
    </div>
  </div>
</div>
</body>
</html>
